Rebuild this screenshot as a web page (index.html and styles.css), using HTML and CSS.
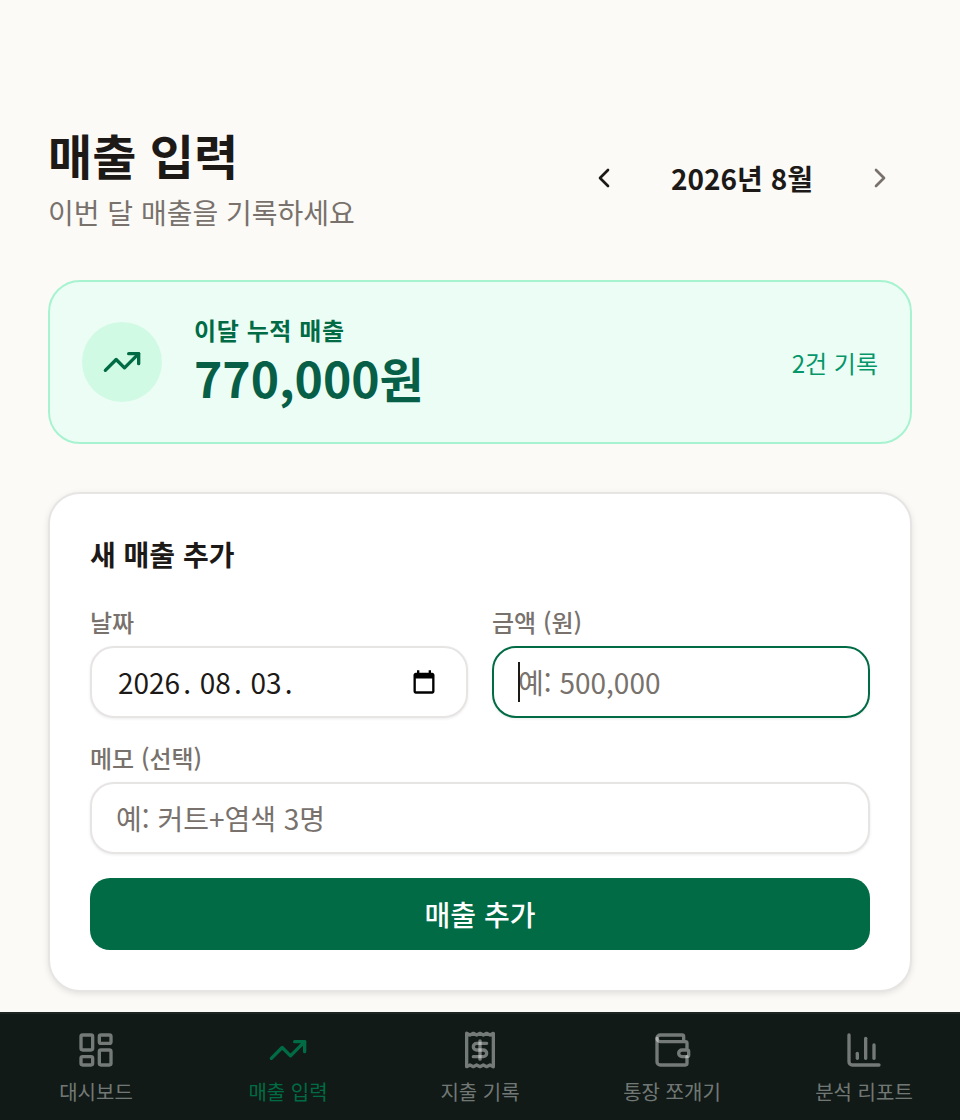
FILE: index.html
```html
<!DOCTYPE html>
<html lang="ko">
<head>
    <meta charset="UTF-8">
    <meta name="viewport" content="width=device-width, initial-scale=1.0">
    <title>매출 입력</title>
    <link rel="stylesheet" href="styles.css">
</head>
<body>
    <main class="page">
        <header class="page-head">
            <div>
                <h1 class="page-title">매출 입력</h1>
                <p class="page-sub">이번 달 매출을 기록하세요</p>
            </div>
            <div class="month-nav">
                <button class="month-btn">
                    <svg viewBox="0 0 24 24" class="chev"><path d="m15 18-6-6 6-6"/></svg>
                </button>
                <span class="month-label">2026년 8월</span>
                <button class="month-btn month-btn-next">
                    <svg viewBox="0 0 24 24" class="chev"><path d="m9 18 6-6-6-6"/></svg>
                </button>
            </div>
        </header>

        <section class="summary">
            <div class="summary-icon">
                <svg viewBox="0 0 24 24" class="icon"><path d="M22 7 13.5 15.5 8.5 10.5 2 17"/><path d="M16 7h6v6"/></svg>
            </div>
            <div class="summary-body">
                <div class="summary-label">이달 누적 매출</div>
                <div class="summary-value">770,000원</div>
            </div>
            <div class="summary-count">2건 기록</div>
        </section>

        <section class="form-card">
            <h2 class="form-title">새 매출 추가</h2>
            <div class="form-row">
                <div class="form-group">
                    <label class="form-label">날짜</label>
                    <div class="field field-date">
                        <span>2026<i class="date-dot">.</i> 08<i class="date-dot">.</i> 03<i class="date-dot">.</i></span>
                        <svg viewBox="0 0 24 24" class="cal-icon"><path d="M19 4h-1V2h-2v2H8V2H6v2H5c-1.1 0-2 .9-2 2v14c0 1.1.9 2 2 2h14c1.1 0 2-.9 2-2V6c0-1.1-.9-2-2-2zm0 16H5V9h14v11z"/></svg>
                    </div>
                </div>
                <div class="form-group">
                    <label class="form-label">금액 (원)</label>
                    <div class="field-wrap">
                        <input class="field field-focus" type="text" placeholder="예: 500,000">
                        <span class="caret"></span>
                    </div>
                </div>
            </div>
            <div class="form-group">
                <label class="form-label">메모 (선택)</label>
                <input class="field" type="text" placeholder="예: 커트+염색 3명">
            </div>
            <button class="submit-btn">매출 추가</button>
        </section>
    </main>

    <nav class="bottom-nav">
        <a class="nav-item">
            <svg viewBox="0 0 24 24" class="icon"><rect width="7" height="9" x="3" y="3" rx="1"/><rect width="7" height="5" x="14" y="3" rx="1"/><rect width="7" height="9" x="14" y="12" rx="1"/><rect width="7" height="5" x="3" y="16" rx="1"/></svg>
            <span>대시보드</span>
        </a>
        <a class="nav-item nav-item-active">
            <svg viewBox="0 0 24 24" class="icon"><path d="M22 7 13.5 15.5 8.5 10.5 2 17"/><path d="M16 7h6v6"/></svg>
            <span>매출 입력</span>
        </a>
        <a class="nav-item">
            <svg viewBox="0 0 24 24" class="icon"><path d="M4 2v20l2-1 2 1 2-1 2 1 2-1 2 1 2-1 2 1V2l-2 1-2-1-2 1-2-1-2 1-2-1-2 1Z"/><path d="M16 8h-6a2 2 0 1 0 0 4h4a2 2 0 1 1 0 4H8"/><path d="M12 17.5v-11"/></svg>
            <span>지출 기록</span>
        </a>
        <a class="nav-item">
            <svg viewBox="0 0 24 24" class="icon"><path d="M19 7V4a1 1 0 0 0-1-1H5a2 2 0 0 0 0 4h15a1 1 0 0 1 1 1v4h-3a2 2 0 0 0 0 4h3a1 1 0 0 0 1-1v-2a1 1 0 0 0-1-1"/><path d="M3 5v14a2 2 0 0 0 2 2h15a1 1 0 0 0 1-1v-4"/></svg>
            <span>통장 쪼개기</span>
        </a>
        <a class="nav-item">
            <svg viewBox="0 0 24 24" class="icon"><path d="M3 3v16a2 2 0 0 0 2 2h16"/><path d="M18 17V9"/><path d="M13 17V5"/><path d="M8 17v-3"/></svg>
            <span>분석 리포트</span>
        </a>
    </nav>
</body>
</html>
```

FILE: styles.css
```css
* {
    box-sizing: border-box;
}

html, body {
    margin: 0;
    padding: 0;
}

body {
    font-family: "Noto Sans CJK KR", "Noto Sans", sans-serif;
    background: #fbfaf7;
    color: #1c1917;
    width: 960px;
    height: 1120px;
    display: flex;
    flex-direction: column;
    overflow: hidden;
}

.page {
    flex: 1;
    padding: 125px 48px 0;
}

.page-head {
    display: flex;
    justify-content: space-between;
    align-items: center;
    margin-bottom: 47px;
}

.page-title {
    font-size: 48px;
    line-height: 58px;
    font-weight: 700;
    margin: 0;
}

.page-sub {
    font-size: 28px;
    line-height: 42px;
    color: #78716c;
    margin: 8px 0 0;
}

.month-nav {
    display: flex;
    align-items: center;
    gap: 16px;
    padding-right: 8px;
    padding-bottom: 2px;
}

.month-btn {
    width: 48px;
    height: 48px;
    display: flex;
    align-items: center;
    justify-content: center;
    background: none;
    border: none;
    padding: 0;
    color: #1c1917;
}

.month-btn-next {
    color: #78716c;
}

.month-label {
    font-size: 28px;
    font-weight: 700;
    width: 196px;
    text-align: center;
}

.chev {
    width: 32px;
    height: 32px;
    fill: none;
    stroke: currentColor;
    stroke-width: 2;
    stroke-linecap: round;
    stroke-linejoin: round;
}

.icon {
    width: 40px;
    height: 40px;
    fill: none;
    stroke: currentColor;
    stroke-width: 2;
    stroke-linecap: round;
    stroke-linejoin: round;
}

.summary {
    height: 164px;
    display: flex;
    align-items: center;
    gap: 32px;
    padding: 0 32px;
    background: #ecfdf5;
    border: 2px solid #a7f3d0;
    border-radius: 32px;
    margin-bottom: 48px;
}

.summary-icon {
    width: 80px;
    height: 80px;
    border-radius: 50%;
    background: #d1fae5;
    color: #006b44;
    display: flex;
    align-items: center;
    justify-content: center;
}

.summary-body {
    flex: 1;
    padding-bottom: 2px;
}

.summary-label {
    font-size: 24px;
    line-height: 32px;
    font-weight: 700;
    letter-spacing: 0.6px;
    color: #006b44;
}

.summary-value {
    font-size: 48px;
    line-height: 62px;
    font-weight: 700;
    color: #065f46;
}

.summary-count {
    font-size: 24px;
    color: #059669;
}

.form-card {
    background: #fff;
    border: 2px solid #e7e5e4;
    border-radius: 32px;
    padding: 40px;
    height: 500px;
    box-shadow: 0 2px 6px rgba(0, 0, 0, 0.1);
}

.form-title {
    font-size: 28px;
    line-height: 40px;
    font-weight: 700;
    margin: 0 0 32px;
}

.form-row {
    display: grid;
    grid-template-columns: 1fr 1fr;
    gap: 24px;
    margin-bottom: 24px;
}

.form-group {
    display: flex;
    flex-direction: column;
    gap: 8px;
}

.form-label {
    font-size: 24px;
    line-height: 32px;
    font-weight: 500;
    color: #78716c;
}

.field {
    width: 100%;
    height: 72px;
    padding: 0 24px;
    background: #fff;
    border: 2px solid #e7e5e4;
    border-radius: 24px;
    font-family: inherit;
    font-size: 28px;
    color: #1c1917;
    box-shadow: 0 1px 3px rgba(0, 0, 0, 0.08);
    outline: none;
}

.field::placeholder {
    color: #78716c;
    opacity: 1;
}

.field-date {
    display: flex;
    align-items: center;
    justify-content: space-between;
    padding-left: 26px;
    word-spacing: 1px;
    color: #1c1917;
}

.date-dot {
    font-style: normal;
    margin-left: 3px;
}

.cal-icon {
    width: 28px;
    height: 28px;
    fill: #000;
    margin-right: 4px;
}

.field-wrap {
    position: relative;
}

.field-focus {
    border-color: #006b44;
}

.caret {
    position: absolute;
    left: 26px;
    top: 16px;
    width: 2px;
    height: 40px;
    background: #1c1917;
}

.submit-btn {
    width: 100%;
    height: 72px;
    margin-top: 24px;
    background: #006b44;
    color: #fff;
    border: none;
    border-radius: 20px;
    font-family: inherit;
    font-size: 28px;
    font-weight: 500;
}

.bottom-nav {
    height: 108px;
    display: grid;
    grid-template-columns: repeat(5, 1fr);
    background: #111a16;
    border-top: 2px solid #1c2521;
}

.nav-item {
    display: flex;
    flex-direction: column;
    align-items: center;
    gap: 6px;
    padding-top: 16px;
    font-size: 20px;
    line-height: 32px;
    color: rgba(255, 255, 255, 0.42);
}

.nav-item-active {
    color: #006b44;
}
```
